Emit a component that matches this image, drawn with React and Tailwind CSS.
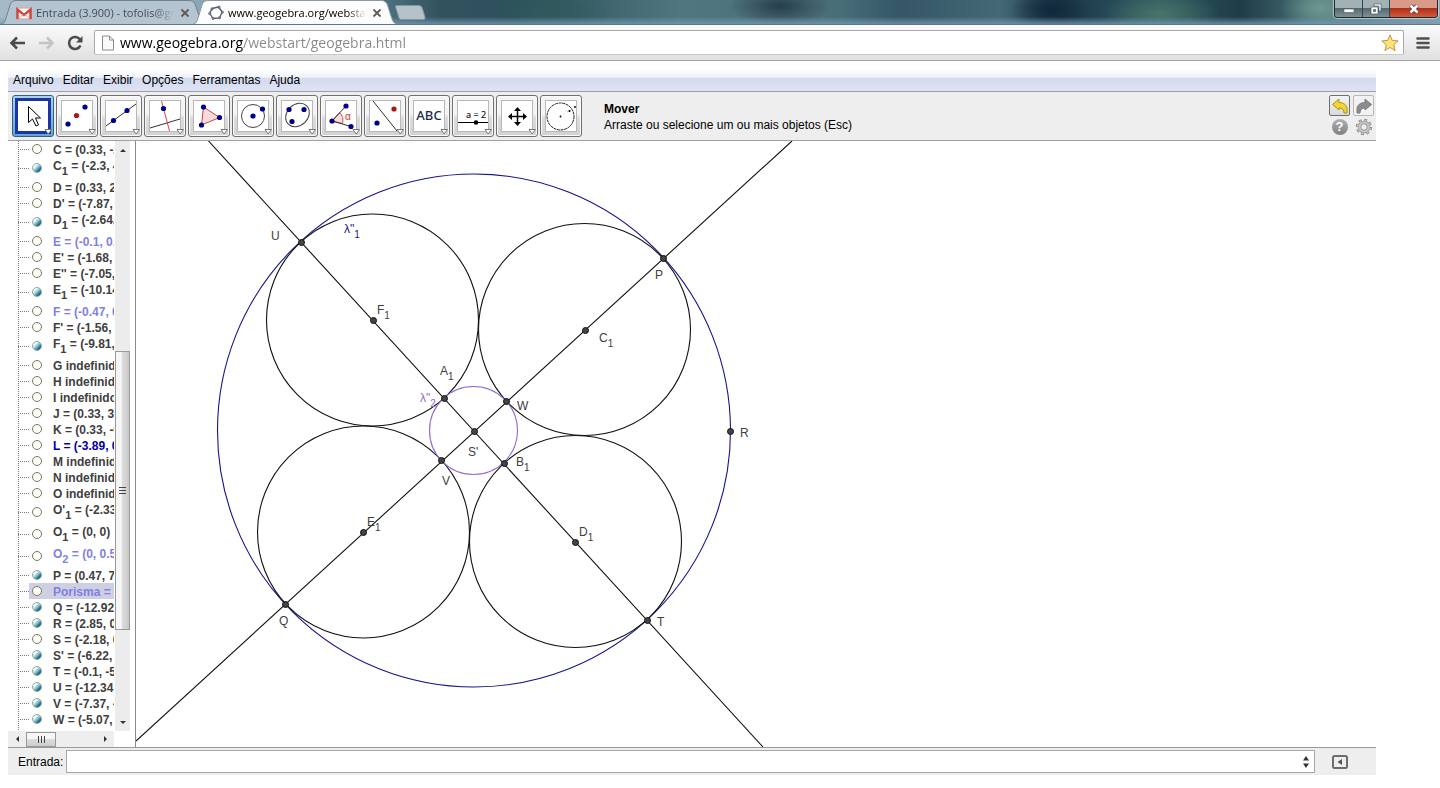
import React, { useState } from "react";

const NAVY = "#00008b";

const ROWS = [
  { n: "C", v: "= (0.33, -2.41)" },
  { n: "C", s: "1", v: "= (-2.3, 4.11)", on: true },
  { n: "D", v: "= (0.33, 2.41)" },
  { n: "D'", v: "= (-7.87, 1.2)" },
  { n: "D", s: "1", v: "= (-2.64, -4.5)", on: true },
  { n: "E", v: "= (-0.1, 0.33)", tone: "light" },
  { n: "E'", v: "= (-1.68, 0.2)" },
  { n: "E''", v: "= (-7.05, 1.8)" },
  { n: "E", s: "1", v: "= (-10.14, -4)", on: true },
  { n: "F", v: "= (-0.47, 0.4)", tone: "light" },
  { n: "F'", v: "= (-1.56, 0.6)" },
  { n: "F", s: "1", v: "= (-9.81, 4.5)", on: true },
  { n: "G", v: "indefinido" },
  { n: "H", v: "indefinido" },
  { n: "I", v: "indefinido" },
  { n: "J", v: "= (0.33, 3.25)" },
  { n: "K", v: "= (0.33, -0.5)" },
  { n: "L", v: "= (-3.89, 0.4)", tone: "blue" },
  { n: "M", v: "indefinido" },
  { n: "N", v: "indefinido" },
  { n: "O", v: "indefinido" },
  { n: "O'", s: "1", v: "= (-2.33, 0.8)" },
  { n: "O", s: "1", v: "= (0, 0)" },
  { n: "O", s: "2", v: "= (0, 0.59)", tone: "light" },
  { n: "P", v: "= (0.47, 7.1)", on: true },
  { n: "Porisma", v: "= 1.25", tone: "light", selected: true },
  { n: "Q", v: "= (-12.92, -6)", on: true },
  { n: "R", v: "= (2.85, 0.4)", on: true },
  { n: "S", v: "= (-2.18, 0.4)" },
  { n: "S'", v: "= (-6.22, 0.4)", on: true },
  { n: "T", v: "= (-0.1, -5.9)", on: true },
  { n: "U", v: "= (-12.34, 7)", on: true },
  { n: "V", v: "= (-7.37, -0.7)", on: true },
  { n: "W", v: "= (-5.07, 1.5)", on: true },
];

const TONES = { light: "text-[#7f7fe6]", blue: "text-[#0000a8]" };

function TreeRow({ row }) {
  const [on, setOn] = useState(!!row.on);
  const tone = TONES[row.tone] || "text-[#404040]";
  return (
    <li className={`flex items-center ${row.s ? "h-[22px]" : "h-4"}`}>
      <span className="w-[10px] shrink-0" />
      <span className="w-[11px] shrink-0 border-t border-dotted border-[#777]" />
      <span className={`flex h-full grow items-center ${row.selected ? "bg-[#cfcfe2]" : ""}`}>
        <button
          type="button"
          aria-label={`Exibir ${row.n}${row.s || ""}`}
          aria-pressed={on}
          onClick={() => setOn(!on)}
          className={`ml-[3px] size-[10px] shrink-0 rounded-full border ${
            on
              ? "border-[#8fa5a5] bg-[linear-gradient(135deg,#f4fffc_25%,#8fc4cc_50%,#1d6f8f_75%)]"
              : "border-[#77775f] bg-[#fffffa]"
          }`}
        />
        <span className={`ml-[11px] text-xs leading-4 font-bold whitespace-nowrap ${tone} ${row.s ? "pb-[5px]" : "pt-px"}`}>
          {row.n}
          {row.s && <sub className="bottom-[-5px] text-[11px]">{row.s}</sub>} {row.v}
        </span>
      </span>
    </li>
  );
}

function Dot({ x, y, c = NAVY }) {
  return <circle cx={x} cy={y} r="2.6" fill={c} />;
}

const TOOLS = [
  {
    name: "Mover",
    selected: true,
    art: <path d="M11.500 6.500v16l4-3.500 3.500 7 2.500-1.200-3-6.800h5z" fill="#fff" stroke="#000" />,
  },
  {
    name: "Ponto",
    art: (
      <>
        <Dot x={7} y={24} />
        <Dot x={15.500} y={15.500} c="#a81818" />
        <Dot x={24} y={7} />
      </>
    ),
  },
  {
    name: "Reta",
    art: (
      <>
        <path d="M1 26L31 4" stroke="#333" />
        <Dot x={8.500} y={20.500} />
        <Dot x={22} y={10.500} />
      </>
    ),
  },
  {
    name: "Reta perpendicular",
    art: (
      <>
        <path d="M1 28L31 19" stroke="#333" />
        <path d="M12.500 1L20.500 31" stroke="#d8484c" />
        <Dot x={14.500} y={8.500} />
      </>
    ),
  },
  {
    name: "Polígono",
    art: (
      <>
        <path d="M10.500 7L26.500 17.500 8.500 25z" fill="#f8dcdc" stroke="#d04040" />
        <Dot x={10.500} y={7} />
        <Dot x={26.500} y={17.500} />
        <Dot x={8.500} y={25} />
      </>
    ),
  },
  {
    name: "Círculo",
    art: (
      <>
        <circle cx="16" cy="16" r="11.500" fill="none" stroke="#444" />
        <Dot x={16} y={16} />
        <Dot x={25.500} y={9} />
      </>
    ),
  },
  {
    name: "Elipse",
    art: (
      <>
        <ellipse cx="16.500" cy="15" rx="13" ry="10.500" transform="rotate(-45 16.500 15)" fill="none" stroke="#444" />
        <Dot x={8} y={9.500} />
        <Dot x={23} y={9.500} />
        <Dot x={11} y={21.500} />
      </>
    ),
  },
  {
    name: "Ângulo",
    art: (
      <>
        <path d="M7 21L14.500 12.500A11 11 0 0 1 17.500 23.500z" fill="#f9dcdc" stroke="#d85050" />
        <path d="M21 6L7 21 26 26.500" fill="none" stroke="#333" />
        <text x="20" y="20" fontSize="10" fill="#d83030">α</text>
        <Dot x={21} y={6} />
        <Dot x={7} y={21} />
        <Dot x={26} y={26.500} />
      </>
    ),
  },
  {
    name: "Reflexão",
    art: (
      <>
        <path d="M4 1L28 31" stroke="#333" />
        <Dot x={8} y={23} />
        <Dot x={25} y={9} c="#a81818" />
      </>
    ),
  },
  {
    name: "Texto",
    art: (
      <text x="16" y="20" fontSize="13" fontWeight="500" textAnchor="middle" fill="#1c2c48" fontFamily="Noto Sans, sans-serif">
        ABC
      </text>
    ),
  },
  {
    name: "Controle deslizante",
    art: (
      <>
        <text x="19" y="18" fontSize="9" fontWeight="500" textAnchor="middle" fill="#111" fontFamily="Noto Sans, sans-serif">
          a = 2
        </text>
        <path d="M1 22.500H31" stroke="#000" />
        <circle cx="19" cy="22.500" r="2.300" fill="#000" />
      </>
    ),
  },
  {
    name: "Mover janela de visualização",
    art: (
      <>
        <path d="M16.500 10v13M10 16.500h13" stroke="#000" strokeWidth="1.500" />
        <path d="M16.500 7l3.500 4h-7zM16.500 26l3.500-4h-7zM7 16.500l4-3.500v7zM26 16.500l-4-3.500v7z" fill="#000" />
      </>
    ),
  },
  {
    name: "Porisma",
    plain: true,
    art: (
      <>
        <circle cx="15.500" cy="16.500" r="13.500" fill="none" stroke="#222" strokeDasharray="3 .6" />
        <path d="M15.500 16.500l15-10" stroke="#bbb" strokeDasharray="1 3" />
        <circle cx="15.500" cy="16.500" r=".9" />
        <circle cx="24.500" cy="11" r="1.100" />
        <circle cx="30" cy="7" r=".9" />
      </>
    ),
  },
];

function ToolButton({ tool }) {
  return (
    <button
      type="button"
      aria-label={tool.name}
      className={`flex size-[42px] items-center justify-center rounded-[3px] border ${
        tool.selected
          ? "border-[#2c628b] bg-[linear-gradient(#a9d4ef,#5fa6d6)]"
          : "border-[#707070] bg-[linear-gradient(#f4f4f4_45%,#dcdcdc_55%,#d2d2d2)] shadow-[inset_0_0_0_1px_#fafafa]"
      }`}
    >
      <svg viewBox="0 0 32 32" className="size-8 overflow-visible" fontFamily="Liberation Sans, sans-serif">
        <rect x=".5" y=".5" width="31" height="31" fill="#fff" stroke="#b8b8b8" />
        {tool.selected && <rect x="-.5" y="-.5" width="33" height="33" fill="none" stroke="#1e34a4" strokeWidth="3" />}
        {tool.art}
        {!tool.plain && <path d="M28 29.500h6.500L31.200 34z" fill="#fff" stroke="#777" />}
      </svg>
    </button>
  );
}

const CIRCLES = [
  [474, 430.5, 256.5, "#14148c"],
  [372.5, 320, 106, "#111"],
  [584.5, 329.5, 106, "#111"],
  [363.5, 532, 106, "#111"],
  [575.5, 541.5, 106, "#111"],
  [473.5, 430.5, 44, "#9068d0"],
];

const POINTS = [
  [301, 242], [663, 258], [373, 320], [585, 330], [444, 398], [506, 401], [474, 431], [441, 460],
  [504, 463], [730, 431], [363, 532], [575, 542], [285, 604], [647, 620],
];

const LABELS = [
  [271, 240, "U"],
  [344, 233, 'λ"', "1", "#14148c"],
  [377, 314, "F", "1"],
  [599, 342, "C", "1"],
  [655, 279, "P"],
  [440, 375, "A", "1"],
  [420, 402, 'λ"', "2", "#9068d0"],
  [517, 410, "W"],
  [740, 437, "R"],
  [468, 456, "S'"],
  [516, 466, "B", "1"],
  [442, 485, "V"],
  [367, 526, "E", "1"],
  [579, 536, "D", "1"],
  [279, 625, "Q"],
  [657, 626, "T"],
];

function Construction() {
  return (
    <svg className="block size-full" fontFamily="Liberation Sans, sans-serif" fontSize="12" aria-label="Porisma de Steiner">
      <g transform="translate(-136 -141)">
        {CIRCLES.map(([x, y, r, c]) => (
          <circle key={`${x}-${r}`} cx={x} cy={y} r={r} fill="none" stroke={c} strokeWidth="1.1" />
        ))}
        <path d="M208.500 141L763 747M792 141L136 741" stroke="#111" strokeWidth="1.1" />
        {POINTS.map(([x, y]) => (
          <circle key={`${x}-${y}`} cx={x + 0.5} cy={y + 0.5} r="3" fill="#444" stroke="#111" />
        ))}
        {LABELS.map(([x, y, t, sub, c]) => (
          <text key={`${x}-${y}`} x={x} y={y} fill={c || "#404040"}>
            {t}
            {sub && <tspan dy="5" fontSize="10">{sub}</tspan>}
          </text>
        ))}
      </g>
    </svg>
  );
}

function Arrow({ d }) {
  return (
    <svg viewBox="0 0 8 8" className="size-2">
      <path d={d} fill="#333" />
    </svg>
  );
}

function Tab({ active, title, icon }) {
  return (
    <div className="relative flex h-6 w-[206px] items-center pt-[2px] pr-4 pl-4">
      <svg viewBox="0 0 206 24" preserveAspectRatio="none" className="absolute inset-0 size-full">
        <path
          d="M0 24.500C5 24 5 21 7 15L10 5Q11.500 .5 16 .5H189Q194 .5 195.500 5L199 16C201 22 202 24 206 24.500"
          fill={active ? "#fdfdfd" : "#b4c4d0"}
          stroke={active ? "#8a9aa4" : "#6f8490"}
        />
      </svg>
      <button type="button" className={`relative flex min-w-0 grow items-center gap-1 text-left text-[11px] ${active ? "text-black" : "text-[#444c55]"}`}>
        <span className="shrink-0">{icon}</span>
        <span className="w-[138px] overflow-hidden whitespace-nowrap [mask-image:linear-gradient(to_right,#000_86%,transparent)]">{title}</span>
      </button>
      <button type="button" aria-label="Fechar guia" className="relative shrink-0">
        <svg viewBox="0 0 10 10" className="size-[10px]">
          <path d="M1.500 1.500l7 7M8.500 1.500l-7 7" stroke="#5c5c5c" strokeWidth="1.800" />
        </svg>
      </button>
    </div>
  );
}

const GMAIL = (
  <svg viewBox="0 0 16 16" className="size-4">
    <rect x=".5" y="3" width="15" height="11" fill="#f6f2f2" stroke="#d8a0a0" />
    <path d="M1.500 14V4.500L8 10l6.500-5.500V14" fill="none" stroke="#cc4740" strokeWidth="2.400" />
    <path d="M3 13.500l3.500-4M13 13.500l-3.500-4" stroke="#dcb0b0" />
  </svg>
);

const GEOGEBRA = (
  <svg viewBox="0 0 16 16" className="size-4">
    <path d="M4 3.500L10.500 2 14.300 7 11.500 12.800 5 13.500 1.800 8.500z" fill="#fff" stroke="#555a68" strokeWidth="1.300" strokeLinejoin="round" />
    <g fill="#8888a8" stroke="#444a58" strokeWidth=".5">
      <circle cx="4" cy="4" r="1.200" />
      <circle cx="11" cy="2.200" r="1.200" />
      <circle cx="14.300" cy="7.200" r="1.200" />
      <circle cx="5" cy="13.400" r="1.200" />
      <circle cx="1.700" cy="8.500" r="1.200" />
      <circle cx="11.500" cy="12.800" r="1.200" />
    </g>
  </svg>
);

function BrowserChrome() {
  return (
    <header className="font-['Open_Sans',sans-serif]">
      <div className="flex h-[25px] items-end border-b border-[#5d7887] bg-[linear-gradient(to_bottom,transparent_70%,rgba(120,155,185,.75)),radial-gradient(ellipse_40px_24px_at_1320px_8px,#6d9790,transparent),radial-gradient(ellipse_60px_24px_at_1160px_14px,#467468,transparent),radial-gradient(ellipse_40px_24px_at_1050px_10px,#10273a,transparent),radial-gradient(ellipse_50px_20px_at_780px_6px,#283d4c,transparent),radial-gradient(ellipse_60px_24px_at_550px_10px,#31595c,transparent),linear-gradient(to_right,#a5b9c6_0,#8ba7b5_200px,#4f7482_380px,#32525e_440px,#2c505c_520px,#507680_680px,#486e78_840px,#345666_900px,#456876_1000px,#1c3848_1060px,#2e5660_1160px,#1e3c48_1240px,#4c7478_1320px,#88a2aa_1440px)]">
        <Tab title="Entrada (3.900) - tofolis@gmail.com" icon={GMAIL} />
        <div className="-ml-[14px]">
          <Tab active title="www.geogebra.org/webstart/geogebra" icon={GEOGEBRA} />
        </div>
        <button type="button" aria-label="Nova guia" className="mb-[4px] -ml-[4px]">
          <svg viewBox="0 0 32 15" className="h-[15px] w-8">
            <path d="M1.500 2Q1 .5 3 .5H25Q27 .5 28 2.500L31 12Q31.500 14.500 29.500 14.500H7.500Q5.500 14.500 5 13z" fill="#b5c2ca" stroke="#83949e" />
          </svg>
        </button>
        <div className="mr-[2px] ml-auto flex h-[18px] self-start overflow-hidden rounded-b-[4px] border border-t-0 border-[#1c2a30] shadow-[0_0_1px_1px_rgba(255,255,255,.5)]">
          <button type="button" aria-label="Minimizar" className="flex w-[28px] items-center justify-center border-r border-[#33454d] bg-[linear-gradient(#a2b1b4_45%,#56696f_50%,#7e9196)]">
            <svg viewBox="0 0 12 12" className="size-3"><rect x="1" y="6" width="10" height="3.500" fill="#fff" stroke="#4a5a62" strokeWidth=".6" /></svg>
          </button>
          <button type="button" aria-label="Restaurar" className="flex w-[27px] items-center justify-center border-r border-[#33454d] bg-[linear-gradient(#a2b1b4_45%,#56696f_50%,#7e9196)]">
            <svg viewBox="0 0 12 12" className="size-3">
              <path d="M4 1h7v7H9V3H4z" fill="#fff" stroke="#3c4a52" strokeWidth=".6" />
              <path d="M1 4h7v7H1zM3.500 6.500v2h2v-2z" fill="#fff" fillRule="evenodd" stroke="#3c4a52" strokeWidth=".6" />
            </svg>
          </button>
          <button type="button" aria-label="Fechar" className="flex w-[47px] items-center justify-center bg-[linear-gradient(#d99a88_45%,#b0301a_50%,#cf5a3c)]">
            <svg viewBox="0 0 12 12" className="size-3">
              <path d="M2.500 2.500l7 7M9.500 2.500l-7 7" stroke="#5a3030" strokeWidth="4" />
              <path d="M2.500 2.500l7 7M9.500 2.500l-7 7" stroke="#fff" strokeWidth="2.600" />
            </svg>
          </button>
        </div>
      </div>
      <div className="flex h-9 items-center border-b border-[#a3a3a3] bg-[linear-gradient(#fbfbfb,#e0e0e0)] pr-[10px] pl-[9px]">
        <button type="button" aria-label="Voltar">
          <svg viewBox="0 0 16 16" className="size-4"><path d="M8 2.500L2.500 8 8 13.500M3 8h13" fill="none" stroke="#4c4c4c" strokeWidth="2.600" /></svg>
        </button>
        <button type="button" aria-label="Avançar" className="ml-[14px]">
          <svg viewBox="0 0 16 16" className="size-4"><path d="M8 2.500L13.500 8 8 13.500M13 8H0" fill="none" stroke="#c4c4c4" strokeWidth="2.600" /></svg>
        </button>
        <button type="button" aria-label="Atualizar" className="ml-3">
          <svg viewBox="0 0 16 16" className="size-4">
            <path d="M13 4.500A6 6 0 1 0 13.500 10.500" fill="none" stroke="#4c4c4c" strokeWidth="2.600" />
            <path d="M15.500 1v6.500H9z" fill="#4c4c4c" />
          </svg>
        </button>
        <div className="ml-[11px] flex h-[25px] grow items-center rounded-[2px] border border-[#a8a8a8] border-b-[#c8c8c8] bg-white pr-1 pl-[6px]">
          <svg viewBox="0 0 14 16" className="h-4 w-[14px]">
            <path d="M1.500 1h7l4 4v10h-11zM8.500 1v4h4" fill="#fafafa" stroke="#8a8a8a" />
          </svg>
          <input
            aria-label="Endereço"
            defaultValue="www.geogebra.org/webstart/geogebra.html"
            className="ml-[5px] min-w-0 grow bg-[linear-gradient(to_right,#000_123px,#888_123px)] bg-clip-text text-sm leading-5 text-transparent outline-none"
          />
          <button type="button" aria-label="Favorito">
            <svg viewBox="0 0 18 18" className="size-[18px]">
              <path d="M9 1l2.300 5.400 5.900.5-4.500 3.900 1.400 5.800L9 13.500l-5.100 3.100 1.400-5.800L.8 6.900l5.900-.5z" fill="#fbe27a" stroke="#c8963c" strokeLinejoin="round" />
            </svg>
          </button>
        </div>
        <button type="button" aria-label="Menu" className="ml-3">
          <svg viewBox="0 0 14 14" className="size-[14px]"><path d="M1.500 2.500h11M1.500 7h11M1.500 11.500h11" stroke="#505050" strokeWidth="2.600" strokeLinecap="round" /></svg>
        </button>
      </div>
    </header>
  );
}

export default function App() {
  return (
    <div className="min-h-screen overflow-x-hidden bg-white font-['Liberation_Sans',Arial,sans-serif] text-xs text-black">
      <BrowserChrome />
      <main className="mt-[9px] mr-16 ml-2">
        <nav className="flex h-[21px] items-center gap-[9px] bg-[linear-gradient(#fff,#eef1fa_35%,#d5dbee_40%,#dde2f5)] px-[5px] pb-[2px]">
          {["Arquivo", "Editar", "Exibir", "Opções", "Ferramentas", "Ajuda"].map((m) => (
            <button key={m} type="button">{m}</button>
          ))}
        </nav>
        <div className="flex h-[50px] items-center justify-between border-y border-[#a0a0a4] bg-[#eeeeee] pr-[2px] pl-1">
          <div className="flex items-center">
            <div className="flex gap-[2px]">
              {TOOLS.map((t) => <ToolButton key={t.name} tool={t} />)}
            </div>
            <div className="ml-[22px] pt-[2px] leading-4">
              <p className="font-bold">Mover</p>
              <p>Arraste ou selecione um ou mais objetos (Esc)</p>
            </div>
          </div>
          <div className="grid grid-cols-2 place-items-center gap-x-[3px] gap-y-[2px] pb-px">
            <button type="button" aria-label="Desfazer" className="flex size-[21px] items-center justify-center rounded-[2px] border border-[#707070] bg-[linear-gradient(#f4f4f4,#dadada)]">
              <svg viewBox="0 0 18 18" className="size-[18px]">
                <path d="M1.500 7.500L8 2v3.500c5 0 8 3 8 6.500v4h-3c0-3-1.500-5-5-5V13z" fill="#f2d432" stroke="#a8921c" strokeLinejoin="round" />
              </svg>
            </button>
            <button type="button" aria-label="Refazer" className="flex size-[21px] items-center justify-center rounded-[2px] border border-[#b8b8b8] bg-[#f2f2f2]">
              <svg viewBox="0 0 18 18" className="size-[18px]">
                <path d="M16.500 7.500L10 2v3.500c-5 0-8 3-8 6.500v4h3c0-3 1.500-5 5-5V13z" fill="#8c8c8c" stroke="#7c7c7c" strokeLinejoin="round" />
              </svg>
            </button>
            <button type="button" aria-label="Ajuda" className="flex size-4 items-center justify-center rounded-full bg-[linear-gradient(#b0b0b0,#808080)] text-[13px] font-bold text-white">?</button>
            <button type="button" aria-label="Preferências">
              <svg viewBox="0 0 18 18" className="size-[18px]">
                <circle cx="9" cy="9" r="6.700" fill="none" stroke="#868686" strokeWidth="3" strokeDasharray="2.800 2.460" />
                <circle cx="9" cy="9" r="4.500" fill="none" stroke="#868686" strokeWidth="3.600" />
                <circle cx="9" cy="9" r="4.600" fill="none" stroke="#c6c6c6" strokeWidth="2.400" />
                <circle cx="9" cy="9" r="6.700" fill="none" stroke="#c6c6c6" strokeWidth="1.600" strokeDasharray="1.600 3.660" strokeDashoffset="-.6" />
              </svg>
            </button>
          </div>
        </div>

        <div className="flex">
          <aside className="flex w-32 shrink-0 border-r border-[#8a8a8a]">
            <div className="flex w-[106px] flex-col overflow-hidden">
              <ul className="flex grow flex-col bg-[linear-gradient(#777_50%,transparent_0)] bg-[length:1px_2px] bg-[position:10px_0] bg-repeat-y pb-1">
                {ROWS.map((r, i) => <TreeRow key={i} row={r} />)}
              </ul>
              <div className="flex h-4 items-center bg-[#eeeeee]">
                <button type="button" aria-label="Rolar para a esquerda" className="flex w-[18px] justify-center pr-px"><Arrow d="M6 1v6L3 4z" /></button>
                <button type="button" aria-label="Barra horizontal" className="flex h-[15px] w-[30px] items-center justify-center gap-[2px] border border-[#999] bg-[linear-gradient(#f6f6f6_45%,#dcdcdc_50%,#cdcdcd)]">
                  <span className="h-[7px] w-px bg-[#444]" />
                  <span className="h-[7px] w-px bg-[#444]" />
                  <span className="h-[7px] w-px bg-[#444]" />
                </button>
                <button type="button" aria-label="Rolar para a direita" className="ml-auto flex w-[18px] justify-center"><Arrow d="M3 1v6l3-3z" /></button>
              </div>
            </div>
            <div className="mb-4 ml-px flex w-[15px] flex-col bg-[#ececec]">
              <button type="button" aria-label="Rolar para cima" className="flex h-[17px] items-center justify-center"><Arrow d="M1 6h6L4 3z" /></button>
              <div className="flex-[194]" />
              <button type="button" aria-label="Barra vertical" className="flex flex-[278] flex-col items-center justify-center gap-[2px] border border-[#999] bg-[linear-gradient(to_right,#f6f6f6_40%,#dcdcdc_50%,#c8c8c8)]">
                <span className="h-px w-[7px] bg-[#444]" />
                <span className="h-px w-[7px] bg-[#444]" />
                <span className="h-px w-[7px] bg-[#444]" />
              </button>
              <div className="flex-[84]" />
              <button type="button" aria-label="Rolar para baixo" className="flex h-[17px] items-center justify-center"><Arrow d="M1 2h6L4 5z" /></button>
            </div>
          </aside>
          <section className="min-w-0 grow"><Construction /></section>
        </div>

        <div className="flex h-7 items-center border-t border-[#9a9a9e] bg-[#eeeeee] pl-[10px]">
          <label htmlFor="entrada">Entrada:</label>
          <div className="ml-[3px] flex h-[23px] grow items-center border border-[#a8a8a8] bg-white pr-1">
            <input id="entrada" className="h-full min-w-0 grow px-1 outline-none" />
            <button type="button" aria-label="Histórico">
              <svg viewBox="0 0 8 12" className="h-3 w-2"><path d="M4 0l3 4.500H1zM4 12L1 7.500h6z" fill="#333" /></svg>
            </button>
          </div>
          <button type="button" aria-label="Lista de comandos" className="mr-7 ml-[17px]">
            <svg viewBox="0 0 16 14" className="h-[14px] w-4">
              <rect x="1" y="1" width="14" height="12" rx="1.500" fill="#eee" stroke="#6c6c6c" strokeWidth="2" />
              <path d="M10 4v6L5.500 7z" fill="#555" />
            </svg>
          </button>
        </div>
      </main>
    </div>
  );
}
